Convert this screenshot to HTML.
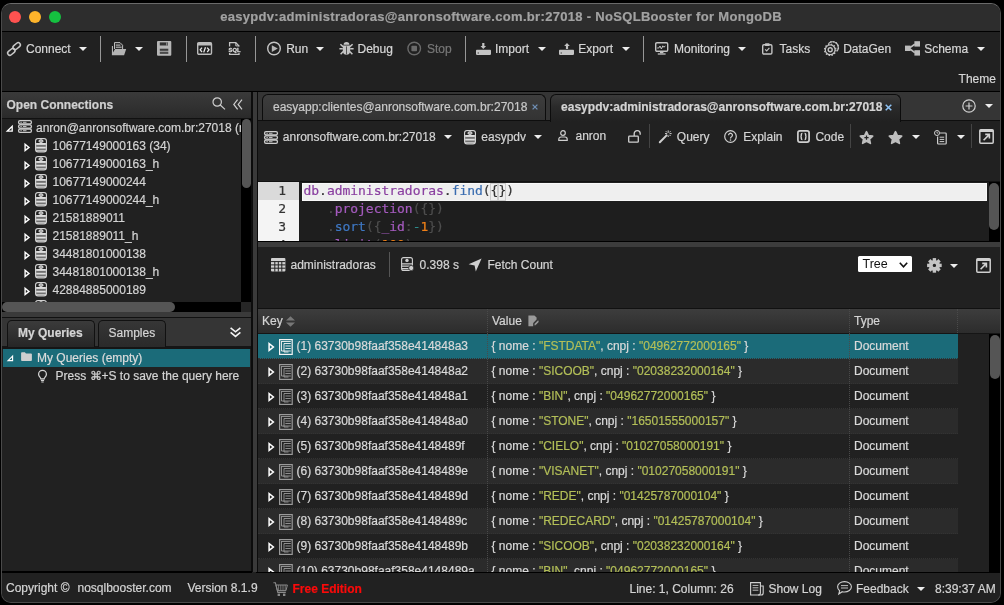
<!DOCTYPE html>
<html>
<head>
<meta charset="utf-8">
<title>NoSQLBooster for MongoDB</title>
<style>
html,body{margin:0;padding:0;background:#000;}
body{width:1004px;height:605px;overflow:hidden;position:relative;font-family:"Liberation Sans",sans-serif;font-size:12px;color:#d4d4d4;}
#win{position:absolute;left:1px;top:3px;width:1000px;height:600px;box-sizing:border-box;border:1px solid #4a4a4a;border-top-color:#6a6a6a;border-radius:10px;background:#212121;overflow:hidden;}
#in{position:absolute;left:-2px;top:-4px;width:1004px;height:605px;will-change:transform;}
.a{position:absolute;}
.t{position:absolute;white-space:nowrap;line-height:16px;height:16px;-webkit-text-stroke:0.2px currentColor;}
.b{font-weight:bold;}
svg{position:absolute;overflow:visible;}
.mono{position:absolute;white-space:pre;font-family:"DejaVu Sans Mono","Liberation Mono",monospace;font-size:13px;letter-spacing:-0.03px;line-height:18px;height:18px;-webkit-text-stroke:0.2px currentColor;}
.s{color:#b3bf58;}
.car{position:absolute;width:0;height:0;border-left:4.2px solid transparent;border-right:4.2px solid transparent;border-top:4.6px solid #ececec;margin-left:-0.2px;margin-top:-0.3px;}
.vs{position:absolute;width:1px;background:#979797;}
</style>
</head>
<body>
<div id="win"><div id="in">

<!-- TITLE BAR -->
<div class="a" id="titlebar" style="left:0;top:0;width:1004px;height:31px;background:#2d2d2d;"></div>
<div class="a" style="left:0;top:31px;width:1004px;height:1px;background:#000;"></div>
<div class="a" style="left:9px;top:11px;width:12px;height:12px;border-radius:50%;background:#fe5250;"></div>
<div class="a" style="left:29px;top:11px;width:12px;height:12px;border-radius:50%;background:#feb42b;"></div>
<div class="a" style="left:49px;top:11px;width:12px;height:12px;border-radius:50%;background:#15c040;"></div>
<div class="t b" id="title" style="left:0;width:1002px;text-align:center;top:9px;font-size:13px;letter-spacing:0.31px;color:#a2a2a2;">easypdv:administradoras@anronsoftware.com.br:27018 - NoSQLBooster for MongoDB</div>

<!-- MAIN TOOLBAR -->
<div class="a" id="toolbar" style="left:0;top:32px;width:1004px;height:59px;background:#212121;"></div>
<div class="a" style="left:0;top:91px;width:1004px;height:1px;background:#000;"></div>


<!-- toolbar items -->
<div id="tb" style="color:#d6d6d6;">
<!-- link icon -->
<svg style="left:5.9px;top:40.7px" width="16" height="16" viewBox="0 0 16 16" fill="none" stroke="#c8c8c8" stroke-width="1.5"><g transform="rotate(-40 8 8)"><rect x="0" y="6.3" width="8.2" height="4.4" rx="2.2"/><rect x="7.8" y="5.3" width="8.2" height="4.4" rx="2.2"/></g></svg>
<div class="t" style="left:26px;top:41px;">Connect</div>
<div class="car" style="left:79px;top:47px;"></div>
<div class="vs" style="left:100px;top:36px;height:26px;"></div>
<!-- open folder icon -->
<svg style="left:111px;top:41px" width="16" height="16" viewBox="0 0 16 16"><path d="M3.5 8V1.6h5.5l2.6 2.6V8" fill="#2c2c2c" stroke="#bebebe" stroke-width="1"/><path d="M4.8 4.1h4.6M4.8 6.2h5.8" stroke="#c8c8c8" stroke-width="1"/><path d="M0.9 5h1.1v6.4L4.1 7.9H15.2L13.1 14.3H0.9z" fill="#b4b4b4"/></svg>
<div class="car" style="left:135px;top:47px;"></div>
<!-- save icon -->
<svg style="left:157.3px;top:41.2px" width="15" height="15" viewBox="0 0 15 15"><rect x="0" y="0" width="14.3" height="14.7" rx="1" fill="#b6b6b6"/><rect x="2.8" y="1.4" width="8.2" height="3.1" fill="#333"/><rect x="9.4" y="1.4" width="0.9" height="3.1" fill="#b6b6b6"/><rect x="2.8" y="7.7" width="8.5" height="2.1" fill="#3c3c3c"/><rect x="2.8" y="10.7" width="8.5" height="2.2" fill="#4a4a4a"/></svg>
<div class="vs" style="left:186px;top:36px;height:26px;"></div>
<!-- code icon -->
<svg style="left:197px;top:42px" width="15" height="13" viewBox="0 0 15 13"><rect x="0.7" y="0.7" width="13.8" height="11.6" rx="1.2" fill="none" stroke="#bcbcbc" stroke-width="1.4"/><rect x="0.7" y="0.7" width="13.8" height="2.8" fill="#bcbcbc"/><path d="M5 5.6L3.2 7.8L5 10M10.2 5.6L12 7.8L10.2 10M8.5 5.2L6.7 10.4" fill="none" stroke="#e8e8e8" stroke-width="1.3"/></svg>
<!-- sql icon -->
<svg style="left:228px;top:42px" width="13" height="13" viewBox="0 0 13 13"><path d="M1.6 4.6V0.7h6.2l3.2 3.2v0.7M1.6 11v1.4h9.4V11" fill="none" stroke="#c4c4c4" stroke-width="1.3"/><path d="M7.8 0.7v3.2h3.2" fill="none" stroke="#c4c4c4" stroke-width="1"/><text x="0.6" y="10" font-family="Liberation Sans, sans-serif" font-size="5.8" font-weight="bold" fill="#d8d8d8" stroke="#d8d8d8" stroke-width="0.3">SQL</text></svg>
<div class="vs" style="left:255px;top:36px;height:26px;"></div>
<!-- run icon -->
<svg style="left:267px;top:41px" width="15" height="15" viewBox="0 0 15 15"><circle cx="7" cy="7.5" r="6.3" fill="none" stroke="#c4c4c4" stroke-width="1.4"/><path d="M4.8 4.3L10.8 7.5L4.8 10.9z" fill="#b4b4b4"/></svg>
<div class="t" style="left:286.2px;top:41px;">Run</div>
<div class="car" style="left:316px;top:47px;"></div>
<!-- bug icon -->
<svg style="left:338.5px;top:41px" width="15" height="15" viewBox="0 0 15 15"><path d="M4.6 3.8a2.9 2.8 0 0 1 5.8 0z" fill="#c4c4c4"/><path d="M3.8 4.6h7.4v5a3.7 4.200 0 0 1-7.4 0z" fill="#c4c4c4"/><path d="M3.8 7.8H0.4M11.200 7.8h3.4M4 5.6L1.4 3.200M11 5.6L13.6 3.200M4.200 10.4L1.6 13.200M10.8 10.4L13.4 13.200" stroke="#c4c4c4" stroke-width="1.5" fill="none"/><path d="M7.5 5.4v8" stroke="#444" stroke-width="0.9"/></svg>
<div class="t" style="left:357.5px;top:41px;">Debug</div>
<!-- stop icon -->
<svg style="left:407px;top:41px" width="15" height="15" viewBox="0 0 15 15"><circle cx="7.2" cy="7.5" r="6.3" fill="none" stroke="#6a6a6a" stroke-width="1.4"/><rect x="4.4" y="4.7" width="5.6" height="5.6" rx="0.8" fill="#6a6a6a"/></svg>
<div class="t" style="left:427px;top:41px;color:#777;">Stop</div>
<div class="vs" style="left:465px;top:36px;height:26px;"></div>
<!-- import icon -->
<svg style="left:476px;top:41px" width="16" height="15" viewBox="0 0 16 15"><rect x="0" y="8.7" width="15" height="5.2" rx="0.8" fill="#c4c4c4"/><rect x="1.6" y="11.4" width="1.4" height="1.2" fill="#555"/><path d="M6.2 2h2.2v3h1.7L7.3 8.1L4.5 5h1.7z" fill="#c4c4c4"/></svg>
<div class="t" style="left:495px;top:41px;">Import</div>
<div class="car" style="left:538px;top:47px;"></div>
<!-- export icon -->
<svg style="left:559px;top:41px" width="16" height="15" viewBox="0 0 16 15"><rect x="0" y="8.7" width="15" height="5.2" rx="0.8" fill="#c4c4c4"/><rect x="1.6" y="11.4" width="1.4" height="1.2" fill="#555"/><path d="M6.9 8h2.2V5h1.7L8 1.9L5.2 5h1.7z" fill="#c4c4c4"/></svg>
<div class="t" style="left:578.3px;top:41px;">Export</div>
<div class="car" style="left:622px;top:47px;"></div>
<div class="vs" style="left:643px;top:36px;height:26px;"></div>
<!-- monitor icon -->
<svg style="left:655px;top:42px" width="14" height="13" viewBox="0 0 14 13"><rect x="0.7" y="0.7" width="12" height="8.6" rx="1.2" fill="none" stroke="#c4c4c4" stroke-width="1.4"/><path d="M2.2 6h1.6l1.2-2l1.4 3l1.4-3.2l1 1.4l1.6-1.2" fill="none" stroke="#c4c4c4" stroke-width="1"/><path d="M5 9.6v1.6h3.4V9.6z" fill="#c4c4c4"/><path d="M2.8 12h7.8" stroke="#c4c4c4" stroke-width="1.3" fill="none"/></svg>
<div class="t" style="left:674px;top:41px;">Monitoring</div>
<div class="car" style="left:738px;top:47px;"></div>
<!-- tasks icon -->
<svg style="left:762px;top:42.5px" width="11" height="12" viewBox="0 0 11 12"><rect x="0.7" y="1.8" width="9.2" height="9.2" rx="1.2" fill="none" stroke="#c4c4c4" stroke-width="1.4"/><rect x="3" y="0.3" width="4.6" height="2.6" rx="0.6" fill="#c4c4c4"/><path d="M3.2 6.4l1.5 1.5l2.7-3" fill="none" stroke="#c4c4c4" stroke-width="1.2"/></svg>
<div class="t" style="left:779.6px;top:41px;">Tasks</div>
<!-- datagen icon -->
<svg style="left:824px;top:41px" width="15" height="15" viewBox="0 0 15 15" fill="none" stroke="#c4c4c4"><circle cx="6.2" cy="8.8" r="4.9" stroke-width="1.2"/><circle cx="6.2" cy="8.8" r="5.7" stroke-width="1.2" stroke-dasharray="1.5 1.480"/><circle cx="6.2" cy="8.8" r="2" stroke-width="1.4"/><path d="M4.4 2.6A5.6 5.6 0 0 1 12.8 10.4" stroke-width="1.2"/><path d="M6.2 0.9A6.2 6.2 0 0 1 14.2 8.6" stroke-width="1.3" stroke-dasharray="1.5 1.4"/></svg>
<div class="t" style="left:843.2px;top:41px;">DataGen</div>
<!-- schema icon -->
<svg style="left:905px;top:41px" width="15" height="15" viewBox="0 0 15 15"><rect x="0" y="4.6" width="5.6" height="5.4" fill="#bcbcbc"/><rect x="9.4" y="0.2" width="5.6" height="5.4" fill="#bcbcbc"/><rect x="9.4" y="9.2" width="5.6" height="5.4" fill="#bcbcbc"/><path d="M5 6.6L9.8 3.2M5 8L9.8 11.6" stroke="#bcbcbc" stroke-width="1.7"/></svg>
<div class="t" style="left:924.2px;top:41px;">Schema</div>
<div class="car" style="left:977px;top:47px;"></div>
<div class="t" style="left:958.6px;top:71px;">Theme</div>
</div>


<!-- LEFT PANEL -->
<div class="a" id="left" style="left:2px;top:92px;width:249px;height:479px;background:#212121;overflow:hidden;"></div>
<div class="a" style="left:2px;top:92px;width:249px;height:26px;background:linear-gradient(#3a3a3a,#2a2a2a);"></div>
<div class="a" style="left:2px;top:118px;width:249px;height:1px;background:#111;"></div>
<div class="t b" style="left:6.5px;top:97px;color:#d0d0d0;">Open Connections</div>
<svg style="left:212px;top:97px" width="14" height="13" viewBox="0 0 14 13" fill="none" stroke="#cfcfcf" stroke-width="1.2"><circle cx="5.2" cy="5" r="4.2"/><path d="M8.2 8L13 12.4"/></svg>
<svg style="left:233px;top:99px" width="10" height="11" viewBox="0 0 10 11" fill="none" stroke="#cfcfcf" stroke-width="1.2"><path d="M4.6 0.6L0.8 5.4L4.6 10.4M9 0.6L5.2 5.4L9 10.4"/></svg>
<!-- tree -->
<div class="a" id="tree" style="left:2px;top:119px;width:239px;height:183px;overflow:hidden;">
<div class="a" style="left:-2px;top:-119px;">
<svg style="left:6px;top:125px" width="7" height="7" viewBox="0 0 7 7"><path d="M6.2 1.2V6.2H1.2z" fill="none" stroke="#fff" stroke-width="1.3"/></svg>
<svg style="left:18px;top:119.8px" width="14" height="13" viewBox="0 0 14 13" fill="none" stroke="#cdcdcd" stroke-width="1.3"><rect x="0.6" y="0.6" width="12.8" height="3.4" rx="1.4"/><rect x="0.6" y="4.8" width="12.8" height="3.4" rx="1.4"/><rect x="0.6" y="9" width="12.8" height="3.4" rx="1.4"/><path d="M2.4 2.3h1.4M5 2.3h3.5M2.4 6.5h1.4M5 6.5h3.5M2.4 10.7h1.4M5 10.7h3.5" stroke-width="0.9"/></svg>
<div class="t" style="left:36px;top:120px;">anron@anronsoftware.com.br:27018 (mongodb 6.0.2)</div>
<svg style="left:24px;top:142.5px" width="7" height="9" viewBox="0 0 7 9"><path d="M1.1 1.3L5 4.4L1.1 7.5z" fill="none" stroke="#fff" stroke-width="1.4"/></svg><svg style="left:35px;top:138.2px" width="12" height="15" viewBox="0 0 12 15"><rect x="0.6" y="0.6" width="10.8" height="13.4" rx="2.4" fill="#707070" stroke="#d2d2d2" stroke-width="1.2"/><path d="M1.2 5V3a1.8 1.8 0 0 1 1.8-1.8h6a1.8 1.8 0 0 1 1.8 1.8V5z" fill="#222"/><ellipse cx="6" cy="3.1" rx="2.1" ry="1.3" fill="#9a9a9a" stroke="#e4e4e4" stroke-width="1"/><rect x="1.2" y="5" width="9.6" height="1.9" fill="#dedede"/><rect x="1.2" y="8.8" width="9.6" height="1.7" fill="#dedede"/><rect x="1.2" y="12.3" width="9.6" height="1" fill="#dedede"/></svg><div class="t" style="left:52.5px;top:138px;">10677149000163 (34)</div>
<svg style="left:24px;top:160.5px" width="7" height="9" viewBox="0 0 7 9"><path d="M1.1 1.3L5 4.4L1.1 7.5z" fill="none" stroke="#fff" stroke-width="1.4"/></svg><svg style="left:35px;top:156.2px" width="12" height="15" viewBox="0 0 12 15"><rect x="0.6" y="0.6" width="10.8" height="13.4" rx="2.4" fill="#707070" stroke="#d2d2d2" stroke-width="1.2"/><path d="M1.2 5V3a1.8 1.8 0 0 1 1.8-1.8h6a1.8 1.8 0 0 1 1.8 1.8V5z" fill="#222"/><ellipse cx="6" cy="3.1" rx="2.1" ry="1.3" fill="#9a9a9a" stroke="#e4e4e4" stroke-width="1"/><rect x="1.2" y="5" width="9.6" height="1.9" fill="#dedede"/><rect x="1.2" y="8.8" width="9.6" height="1.7" fill="#dedede"/><rect x="1.2" y="12.3" width="9.6" height="1" fill="#dedede"/></svg><div class="t" style="left:52.5px;top:156px;">10677149000163_h</div>
<svg style="left:24px;top:178.5px" width="7" height="9" viewBox="0 0 7 9"><path d="M1.1 1.3L5 4.4L1.1 7.5z" fill="none" stroke="#fff" stroke-width="1.4"/></svg><svg style="left:35px;top:174.2px" width="12" height="15" viewBox="0 0 12 15"><rect x="0.6" y="0.6" width="10.8" height="13.4" rx="2.4" fill="#707070" stroke="#d2d2d2" stroke-width="1.2"/><path d="M1.2 5V3a1.8 1.8 0 0 1 1.8-1.8h6a1.8 1.8 0 0 1 1.8 1.8V5z" fill="#222"/><ellipse cx="6" cy="3.1" rx="2.1" ry="1.3" fill="#9a9a9a" stroke="#e4e4e4" stroke-width="1"/><rect x="1.2" y="5" width="9.6" height="1.9" fill="#dedede"/><rect x="1.2" y="8.8" width="9.6" height="1.7" fill="#dedede"/><rect x="1.2" y="12.3" width="9.6" height="1" fill="#dedede"/></svg><div class="t" style="left:52.5px;top:174px;">10677149000244</div>
<svg style="left:24px;top:196.5px" width="7" height="9" viewBox="0 0 7 9"><path d="M1.1 1.3L5 4.4L1.1 7.5z" fill="none" stroke="#fff" stroke-width="1.4"/></svg><svg style="left:35px;top:192.2px" width="12" height="15" viewBox="0 0 12 15"><rect x="0.6" y="0.6" width="10.8" height="13.4" rx="2.4" fill="#707070" stroke="#d2d2d2" stroke-width="1.2"/><path d="M1.2 5V3a1.8 1.8 0 0 1 1.8-1.8h6a1.8 1.8 0 0 1 1.8 1.8V5z" fill="#222"/><ellipse cx="6" cy="3.1" rx="2.1" ry="1.3" fill="#9a9a9a" stroke="#e4e4e4" stroke-width="1"/><rect x="1.2" y="5" width="9.6" height="1.9" fill="#dedede"/><rect x="1.2" y="8.8" width="9.6" height="1.7" fill="#dedede"/><rect x="1.2" y="12.3" width="9.6" height="1" fill="#dedede"/></svg><div class="t" style="left:52.5px;top:192px;">10677149000244_h</div>
<svg style="left:24px;top:214.5px" width="7" height="9" viewBox="0 0 7 9"><path d="M1.1 1.3L5 4.4L1.1 7.5z" fill="none" stroke="#fff" stroke-width="1.4"/></svg><svg style="left:35px;top:210.2px" width="12" height="15" viewBox="0 0 12 15"><rect x="0.6" y="0.6" width="10.8" height="13.4" rx="2.4" fill="#707070" stroke="#d2d2d2" stroke-width="1.2"/><path d="M1.2 5V3a1.8 1.8 0 0 1 1.8-1.8h6a1.8 1.8 0 0 1 1.8 1.8V5z" fill="#222"/><ellipse cx="6" cy="3.1" rx="2.1" ry="1.3" fill="#9a9a9a" stroke="#e4e4e4" stroke-width="1"/><rect x="1.2" y="5" width="9.6" height="1.9" fill="#dedede"/><rect x="1.2" y="8.8" width="9.6" height="1.7" fill="#dedede"/><rect x="1.2" y="12.3" width="9.6" height="1" fill="#dedede"/></svg><div class="t" style="left:52.5px;top:210px;">21581889011</div>
<svg style="left:24px;top:232.5px" width="7" height="9" viewBox="0 0 7 9"><path d="M1.1 1.3L5 4.4L1.1 7.5z" fill="none" stroke="#fff" stroke-width="1.4"/></svg><svg style="left:35px;top:228.2px" width="12" height="15" viewBox="0 0 12 15"><rect x="0.6" y="0.6" width="10.8" height="13.4" rx="2.4" fill="#707070" stroke="#d2d2d2" stroke-width="1.2"/><path d="M1.2 5V3a1.8 1.8 0 0 1 1.8-1.8h6a1.8 1.8 0 0 1 1.8 1.8V5z" fill="#222"/><ellipse cx="6" cy="3.1" rx="2.1" ry="1.3" fill="#9a9a9a" stroke="#e4e4e4" stroke-width="1"/><rect x="1.2" y="5" width="9.6" height="1.9" fill="#dedede"/><rect x="1.2" y="8.8" width="9.6" height="1.7" fill="#dedede"/><rect x="1.2" y="12.3" width="9.6" height="1" fill="#dedede"/></svg><div class="t" style="left:52.5px;top:228px;">21581889011_h</div>
<svg style="left:24px;top:250.5px" width="7" height="9" viewBox="0 0 7 9"><path d="M1.1 1.3L5 4.4L1.1 7.5z" fill="none" stroke="#fff" stroke-width="1.4"/></svg><svg style="left:35px;top:246.2px" width="12" height="15" viewBox="0 0 12 15"><rect x="0.6" y="0.6" width="10.8" height="13.4" rx="2.4" fill="#707070" stroke="#d2d2d2" stroke-width="1.2"/><path d="M1.2 5V3a1.8 1.8 0 0 1 1.8-1.8h6a1.8 1.8 0 0 1 1.8 1.8V5z" fill="#222"/><ellipse cx="6" cy="3.1" rx="2.1" ry="1.3" fill="#9a9a9a" stroke="#e4e4e4" stroke-width="1"/><rect x="1.2" y="5" width="9.6" height="1.9" fill="#dedede"/><rect x="1.2" y="8.8" width="9.6" height="1.7" fill="#dedede"/><rect x="1.2" y="12.3" width="9.6" height="1" fill="#dedede"/></svg><div class="t" style="left:52.5px;top:246px;">34481801000138</div>
<svg style="left:24px;top:268.5px" width="7" height="9" viewBox="0 0 7 9"><path d="M1.1 1.3L5 4.4L1.1 7.5z" fill="none" stroke="#fff" stroke-width="1.4"/></svg><svg style="left:35px;top:264.2px" width="12" height="15" viewBox="0 0 12 15"><rect x="0.6" y="0.6" width="10.8" height="13.4" rx="2.4" fill="#707070" stroke="#d2d2d2" stroke-width="1.2"/><path d="M1.2 5V3a1.8 1.8 0 0 1 1.8-1.8h6a1.8 1.8 0 0 1 1.8 1.8V5z" fill="#222"/><ellipse cx="6" cy="3.1" rx="2.1" ry="1.3" fill="#9a9a9a" stroke="#e4e4e4" stroke-width="1"/><rect x="1.2" y="5" width="9.6" height="1.9" fill="#dedede"/><rect x="1.2" y="8.8" width="9.6" height="1.7" fill="#dedede"/><rect x="1.2" y="12.3" width="9.6" height="1" fill="#dedede"/></svg><div class="t" style="left:52.5px;top:264px;">34481801000138_h</div>
<svg style="left:24px;top:286.5px" width="7" height="9" viewBox="0 0 7 9"><path d="M1.1 1.3L5 4.4L1.1 7.5z" fill="none" stroke="#fff" stroke-width="1.4"/></svg><svg style="left:35px;top:282.2px" width="12" height="15" viewBox="0 0 12 15"><rect x="0.6" y="0.6" width="10.8" height="13.4" rx="2.4" fill="#707070" stroke="#d2d2d2" stroke-width="1.2"/><path d="M1.2 5V3a1.8 1.8 0 0 1 1.8-1.8h6a1.8 1.8 0 0 1 1.8 1.8V5z" fill="#222"/><ellipse cx="6" cy="3.1" rx="2.1" ry="1.3" fill="#9a9a9a" stroke="#e4e4e4" stroke-width="1"/><rect x="1.2" y="5" width="9.6" height="1.9" fill="#dedede"/><rect x="1.2" y="8.8" width="9.6" height="1.7" fill="#dedede"/><rect x="1.2" y="12.3" width="9.6" height="1" fill="#dedede"/></svg><div class="t" style="left:52.5px;top:282px;">42884885000189</div>
<svg style="left:24px;top:304.5px" width="7" height="9" viewBox="0 0 7 9"><path d="M1.1 1.3L5 4.4L1.1 7.5z" fill="none" stroke="#fff" stroke-width="1.4"/></svg><svg style="left:35px;top:300.2px" width="12" height="15" viewBox="0 0 12 15"><rect x="0.6" y="0.6" width="10.8" height="13.4" rx="2.4" fill="#707070" stroke="#d2d2d2" stroke-width="1.2"/><path d="M1.2 5V3a1.8 1.8 0 0 1 1.8-1.8h6a1.8 1.8 0 0 1 1.8 1.8V5z" fill="#222"/><ellipse cx="6" cy="3.1" rx="2.1" ry="1.3" fill="#9a9a9a" stroke="#e4e4e4" stroke-width="1"/><rect x="1.2" y="5" width="9.6" height="1.9" fill="#dedede"/><rect x="1.2" y="8.8" width="9.6" height="1.7" fill="#dedede"/><rect x="1.2" y="12.3" width="9.6" height="1" fill="#dedede"/></svg><div class="t" style="left:52.5px;top:300px;">42884885000189_h</div>
</div></div>
<!-- scrollbars -->
<div class="a" style="left:241px;top:119px;width:10px;height:183px;background:#000;"></div>
<div class="a" style="left:241.5px;top:119px;width:9.5px;height:69px;border-radius:5px;background:#555;"></div>
<div class="a" style="left:2px;top:302px;width:239px;height:10px;background:#000;"></div>
<div class="a" style="left:2px;top:302.3px;width:173px;height:9.4px;border-radius:5px;background:#555;"></div>
<div class="a" style="left:241px;top:302px;width:10px;height:10px;background:#262626;"></div>
<!-- h splitter -->
<div class="a" style="left:2px;top:312px;width:249px;height:5px;background:#3a3a3a;"></div>
<div class="a" style="left:2px;top:317px;width:249px;height:1px;background:#111;"></div>
<!-- bottom-left tabs -->
<div class="a" style="left:2px;top:318px;width:249px;height:29px;background:#353535;"></div>
<div class="a" style="left:2px;top:346px;width:249px;height:2.5px;background:#151515;"></div>
<div class="a" style="left:6.5px;top:320px;width:88px;height:27px;box-sizing:border-box;border:1px solid #111;border-bottom:none;border-radius:5px 5px 0 0;background:linear-gradient(#3b3b3b,#262626);"></div>
<div class="a" style="left:98px;top:320px;width:68px;height:27px;box-sizing:border-box;border:1px solid #111;border-bottom:none;border-radius:5px 5px 0 0;background:linear-gradient(#363636,#2a2a2a);"></div>
<div class="t b" style="left:18px;top:325px;color:#d4d4d4;">My Queries</div>
<div class="t" style="left:108.5px;top:325px;color:#d4d4d4;">Samples</div>
<svg style="left:230px;top:327px" width="11" height="11" viewBox="0 0 11 11" fill="none" stroke="#f4f4f4" stroke-width="1.6"><path d="M0.6 0.8L5.5 4.8L10.4 0.8M0.6 5.4L5.5 9.4L10.4 5.4"/></svg>
<div class="a" style="left:3px;top:349px;width:247px;height:18px;background:#1b6b79;"></div>
<svg style="left:7px;top:354.8px" width="6.3" height="6.3" viewBox="0 0 7 7"><path d="M6.2 1.2V6.2H1.2z" fill="none" stroke="#fff" stroke-width="1.3"/></svg>
<svg style="left:20.5px;top:352px" width="11" height="9" viewBox="0 0 12 10"><path d="M0 1.2a1 1 0 0 1 1-1h3.2l1.2 1.4H11a1 1 0 0 1 1 1V9a1 1 0 0 1-1 1H1a1 1 0 0 1-1-1z" fill="#d0d0d0"/></svg>
<div class="t" style="left:37px;top:349.5px;color:#dcdcdc;">My Queries (empty)</div>
<svg style="left:37.5px;top:369.5px" width="9" height="13" viewBox="0 0 9 13" fill="none" stroke="#d4d4d4" stroke-width="1.25"><path d="M2.8 8.8C2.8 7.4 0.6 6.6 0.6 4.2A3.9 3.8 0 0 1 8.4 4.2C8.4 6.6 6.2 7.4 6.2 8.8z"/><path d="M2.9 10.4h3.2M3.3 12h2.4" stroke-width="1.1"/></svg>
<div class="t" style="left:55.5px;top:367.5px;">Press ⌘+S to save the query here</div>
<!-- v splitter -->
<div class="a" style="left:251px;top:92px;width:1.5px;height:480px;background:#0c0c0c;"></div>
<div class="a" style="left:252.5px;top:92px;width:4.3px;height:480px;background:#3a3a3a;"></div>
<div class="a" style="left:256.8px;top:92px;width:1.2px;height:480px;background:#0c0c0c;"></div>
<div class="a" style="left:0px;top:571px;width:252px;height:2px;background:#000;"></div>
<div class="a" style="left:256px;top:572px;width:748px;height:1px;background:#000;"></div>


<!-- RIGHT PANEL -->
<div class="a" id="right" style="left:258px;top:92px;width:742px;height:480px;background:#212121;"></div>
<!-- tab strip -->
<div class="a" style="left:258px;top:92px;width:742px;height:28px;background:#353535;"></div>
<div class="a" style="left:258px;top:119.5px;width:742px;height:1.5px;background:#0e0e0e;"></div>
<div class="a" style="left:262px;top:94px;width:284px;height:26px;box-sizing:border-box;border:1px solid #0c0c0c;border-bottom:none;border-radius:6px 6px 0 0;background:linear-gradient(#3d3d3d,#333);"></div>
<div class="t" style="left:273px;top:98.5px;color:#cacaca;">easyapp:clientes@anronsoftware.com.br:27018</div>
<svg style="left:532px;top:104px" width="6" height="6" viewBox="0 0 6 6"><path d="M0.6 0.6L5.4 5.4M5.4 0.6L0.6 5.4" stroke="#6f8fb5" stroke-width="1.3"/></svg>
<div class="a" style="left:550px;top:94px;width:351px;height:27.5px;box-sizing:border-box;border:1px solid #0c0c0c;border-bottom:none;border-radius:6px 6px 0 0;background:linear-gradient(#3a3a3a,#2a2a2a 45%,#212121);"></div>
<div class="t b" style="left:561px;top:98.5px;color:#d4d4d4;letter-spacing:0.02px;">easypdv:administradoras@anronsoftware.com.br:27018</div>
<svg style="left:885px;top:103.5px" width="7" height="7" viewBox="0 0 7 7"><path d="M0.7 0.7L6.3 6.3M6.3 0.7L0.7 6.3" stroke="#8ec2f4" stroke-width="1.5"/></svg>
<svg style="left:962px;top:99px" width="14" height="14" viewBox="0 0 14 14" fill="none" stroke="#d0d0d0" stroke-width="1.2"><circle cx="7" cy="7" r="6.2"/><path d="M7 3.6v6.8M3.6 7h6.8"/></svg>
<div class="car" style="left:985px;top:104.5px;"></div>

<!-- query toolbar -->
<svg style="left:264px;top:130.5px" width="14" height="13" viewBox="0 0 14 13" fill="none" stroke="#cdcdcd" stroke-width="1.3"><rect x="0.6" y="0.6" width="12.8" height="3.4" rx="1.4"/><rect x="0.6" y="4.8" width="12.8" height="3.4" rx="1.4"/><rect x="0.6" y="9" width="12.8" height="3.4" rx="1.4"/><path d="M2.4 2.3h1.4M5 2.3h3.5M2.4 6.5h1.4M5 6.5h3.5M2.4 10.7h1.4M5 10.7h3.5" stroke-width="0.9"/></svg>
<div class="t" style="left:282.8px;top:128.5px;">anronsoftware.com.br:27018</div>
<div class="car" style="left:444px;top:135px;"></div>
<svg style="left:464px;top:130px" width="12" height="15" viewBox="0 0 12 15"><rect x="0.6" y="0.6" width="10.8" height="13.4" rx="2.4" fill="#707070" stroke="#d2d2d2" stroke-width="1.2"/><path d="M1.2 5V3a1.8 1.8 0 0 1 1.8-1.8h6a1.8 1.8 0 0 1 1.8 1.8V5z" fill="#222"/><ellipse cx="6" cy="3.1" rx="2.1" ry="1.3" fill="#9a9a9a" stroke="#e4e4e4" stroke-width="1"/><rect x="1.2" y="5" width="9.6" height="1.9" fill="#dedede"/><rect x="1.2" y="8.8" width="9.6" height="1.7" fill="#dedede"/><rect x="1.2" y="12.3" width="9.6" height="1" fill="#dedede"/></svg>
<div class="t" style="left:481.3px;top:128.5px;">easypdv</div>
<div class="car" style="left:534px;top:135px;"></div>
<svg style="left:558px;top:130px" width="10" height="11" viewBox="0 0 10 11" fill="none" stroke="#d0d0d0" stroke-width="1.2"><circle cx="5" cy="3" r="2.3"/><path d="M0.8 10.4v-1.2a2.2 2.2 0 0 1 2.2-2.2h4a2.2 2.2 0 0 1 2.2 2.2v1.2z"/></svg>
<div class="t" style="left:575.5px;top:128px;">anron</div>
<svg style="left:628px;top:130px" width="13" height="13" viewBox="0 0 13 13" fill="none" stroke="#d0d0d0" stroke-width="1.3"><rect x="0.7" y="6.2" width="9.6" height="6" rx="0.8"/><path d="M6.2 6V3.6a3 3 0 0 1 6 0v1.2"/></svg>
<div class="vs" style="left:649px;top:124px;height:24px;background:#444;"></div>
<svg style="left:658.5px;top:129.8px" width="13" height="13" viewBox="0 0 13 13"><path d="M0.8 12.2L7.6 5.4" stroke="#d0d0d0" stroke-width="2" stroke-linecap="round"/><path d="M9.2 0.4v2.4M9.2 5.4v1.6M6 3.6h2.2M10.6 3.6h2M6.8 1.2l1.2 1.2M11.6 1.2l-1.2 1.2M11.6 6l-1.2-1.2" stroke="#d0d0d0" stroke-width="1"/></svg>
<div class="t" style="left:676.8px;top:128.5px;">Query</div>
<svg style="left:723.8px;top:129.7px" width="13" height="13" viewBox="0 0 13 13" fill="none" stroke="#d0d0d0" stroke-width="1.2"><circle cx="6.5" cy="6.5" r="5.8"/><path d="M4.6 5.2a1.9 1.9 0 1 1 2.9 1.6c-0.7 0.4-1 0.8-1 1.6" stroke-width="1.3"/><path d="M6.5 9.4v1.3" stroke-width="1.3"/></svg>
<div class="t" style="left:743.2px;top:128.5px;">Explain</div>
<svg style="left:797px;top:129.7px" width="13" height="13" viewBox="0 0 13 13" fill="none" stroke="#d0d0d0"><rect x="0.9" y="0.9" width="11.2" height="11.2" rx="2" stroke-width="1.7"/><path d="M5.4 3.5c-1.3 0-1.1 1.3-1.1 2c0 0.6-0.5 1-0.9 1c0.4 0 0.9 0.4 0.9 1c0 0.700-0.2 2 1.1 2M7.6 3.5c1.3 0 1.1 1.3 1.1 2c0 0.6 0.5 1 0.9 1c-0.4 0-0.9 0.4-0.9 1c0 0.700 0.2 2-1.1 2" stroke-width="1.4"/></svg>
<div class="t" style="left:815.4px;top:128.5px;">Code</div>
<div class="vs" style="left:850px;top:124px;height:24px;background:#444;"></div>
<svg style="left:859px;top:129.5px" width="15" height="15" viewBox="0 0 15 15"><path d="M7.5 1.6l1.9 4l4.3 0.5l-3.2 3l0.9 4.3L7.5 11.2l-3.9 2.2l0.9-4.3l-3.2-3l4.3-0.5z" fill="#bebebe" stroke="#bebebe" stroke-width="1.6" stroke-linejoin="round"/><path d="M7.5 5.6v4.2M5.4 7.7h4.2" stroke="#212121" stroke-width="1.2"/></svg>
<svg style="left:888px;top:129.5px" width="15" height="15" viewBox="0 0 15 15"><path d="M7.5 1.6l1.9 4l4.3 0.5l-3.2 3l0.9 4.3L7.5 11.2l-3.9 2.2l0.9-4.3l-3.2-3l4.3-0.5z" fill="#bebebe" stroke="#bebebe" stroke-width="1.6" stroke-linejoin="round"/></svg>
<div class="car" style="left:912px;top:135px;"></div>
<svg style="left:934px;top:129.5px" width="13" height="15" viewBox="0 0 13 15" fill="none" stroke="#d0d0d0"><path d="M6 3h5.4a0.8 0.8 0 0 1 0.8 0.8v9.4a0.8 0.8 0 0 1-0.8 0.8H4.4a0.8 0.8 0 0 1-0.8-0.8V6.4" stroke-width="1.2"/><circle cx="3" cy="3" r="2.5" stroke-width="1"/><path d="M3 1.6v1.5h1.2" stroke-width="0.8"/><path d="M5.6 7.2h4.6M5.6 9.4h4.6M5.6 11.6h4.6" stroke-width="1"/></svg>
<div class="car" style="left:957px;top:135px;"></div>
<div class="vs" style="left:971px;top:124px;height:24px;background:#444;"></div>
<svg style="left:979px;top:129px" width="15" height="15" viewBox="0 0 15 15"><rect x="0.8" y="0.8" width="13.4" height="13.4" rx="1" fill="none" stroke="#d0d0d0" stroke-width="1.5"/><rect x="0.8" y="0.8" width="13.4" height="2.2" fill="#d0d0d0"/><path d="M4.6 11.2L10.2 5.6M6.2 5.4h4.2v4.2" fill="none" stroke="#d0d0d0" stroke-width="1.6"/></svg>

<!-- editor -->
<div class="a" style="left:258px;top:181px;width:742px;height:1px;background:#111;"></div>
<div class="a" id="editor" style="left:258px;top:182px;width:742px;height:59px;overflow:hidden;background:#1e1e1e;">
  <div class="a" style="left:0;top:0;width:41px;height:59px;background:#f4f4f4;"></div>
  <div class="a" style="left:0;top:0;width:41px;height:18px;background:#dadada;"></div>
  <div class="a" style="left:43.5px;top:1px;width:685px;height:18px;background:#efefef;box-sizing:border-box;border:1px solid #f8f8f8;"></div>
  <div class="a" style="left:731px;top:0;width:11px;height:59px;background:#000;"></div>
  <div class="a" style="left:731px;top:0.5px;width:10px;height:47.5px;border-radius:5px;background:#555;"></div>
  <div class="mono" style="left:0;top:0;width:28px;text-align:right;color:#333;">1</div>
  <div class="mono" style="left:0;top:18px;width:28px;text-align:right;color:#333;">2</div>
  <div class="mono" style="left:0;top:36px;width:28px;text-align:right;color:#333;">3</div>
  <div class="mono" style="left:0;top:54px;width:28px;text-align:right;color:#333;">4</div>
  <div class="a" style="left:232.2px;top:0.5px;width:8.3px;height:18px;box-sizing:border-box;border:1px solid #cdcdcd;"></div><div class="a" style="left:239.8px;top:0.5px;width:8.3px;height:18px;box-sizing:border-box;border:1px solid #cdcdcd;"></div>
  <div class="mono" style="left:45.5px;top:0;"><span style="color:#8a3fa0">db</span><span style="color:#333">.</span><span style="color:#8a3fa0">administradoras</span><span style="color:#333">.</span><span style="color:#3a6db0">find</span><span style="color:#333">({})</span></div>
  <div class="mono" style="left:45.5px;top:18px;"><span style="color:#4e4e4e">   .</span><span style="color:#a55bbf">projection</span><span style="color:#4e4e4e">({})</span></div>
  <div class="mono" style="left:45.5px;top:36px;"><span style="color:#4e4e4e">   .</span><span style="color:#3f78c4">sort</span><span style="color:#4e4e4e">({</span><span style="color:#a55bbf">_id</span><span style="color:#4e4e4e">:</span><span style="color:#2d8a8a">-</span><span style="color:#f08018">1</span><span style="color:#4e4e4e">})</span></div>
  <div class="mono" style="left:45.5px;top:54px;"><span style="color:#4e4e4e">   .</span><span style="color:#a55bbf">limit</span><span style="color:#4e4e4e">(</span><span style="color:#f08018">100</span><span style="color:#4e4e4e">)</span></div>
</div>
<!-- splitter -->
<div class="a" style="left:258px;top:241px;width:742px;height:6.2px;background:#3c3c3c;border-top:1px solid #000;box-sizing:border-box;"></div>

<!-- result toolbar -->
<svg style="left:271px;top:257.5px" width="15" height="14" viewBox="0 0 15 14"><rect x="0" y="0" width="14.4" height="13.6" rx="1" fill="#d0d0d0"/><path d="M0 3.6h14.4M0 6.9h14.4M0 10.2h14.4M3.8 3.6v10M7.3 3.6v10M10.8 3.6v10" stroke="#212121" stroke-width="1"/></svg>
<div class="t" style="left:290.5px;top:256.5px;">administradoras</div>
<div class="vs" style="left:389px;top:252px;height:25px;background:#555;"></div>
<svg style="left:401px;top:257px" width="13" height="14" viewBox="0 0 13 14"><rect x="0.6" y="0.6" width="10.8" height="12.8" rx="2" fill="none" stroke="#d0d0d0" stroke-width="1.1"/><path d="M1 6.2h10v1.2H1zM1 8.6h10v1.2H1zM1 11h10v1.2H1z" fill="#d0d0d0"/><circle cx="6" cy="3.4" r="1.7" fill="#d0d0d0"/><circle cx="10.2" cy="11" r="2.6" fill="#d0d0d0" stroke="#212121" stroke-width="0.8"/></svg>
<div class="t" style="left:419.6px;top:256.5px;">0.398 s</div>
<svg style="left:468px;top:257.5px" width="14" height="14" viewBox="0 0 14 14"><path d="M13.6 0.4L0.6 6.2L6.6 7.4L7.8 13.4z" fill="#d0d0d0"/></svg>
<div class="t" style="left:487.5px;top:256.5px;">Fetch Count</div>
<div class="a" style="left:858.2px;top:255.7px;width:54px;height:16.6px;background:#fff;border-radius:1.5px;"></div>
<div class="t" style="left:862.5px;top:256px;font-size:12.5px;color:#111;-webkit-text-stroke:0;">Tree</div>
<svg style="left:899px;top:261.5px" width="9" height="6" viewBox="0 0 9 6" fill="none" stroke="#111" stroke-width="1.6"><path d="M0.8 0.8L4.5 4.8L8.2 0.8"/></svg>
<svg style="left:926.5px;top:258px" width="15" height="15" viewBox="0 0 15 15"><g transform="translate(7.4 7.4)"><circle r="3.6" fill="none" stroke="#c4c4c4" stroke-width="3.8"/><rect x="-1.7" y="-7.3" width="3.4" height="3" fill="#c4c4c4" transform="rotate(0)"/><rect x="-1.7" y="-7.3" width="3.4" height="3" fill="#c4c4c4" transform="rotate(45)"/><rect x="-1.7" y="-7.3" width="3.4" height="3" fill="#c4c4c4" transform="rotate(90)"/><rect x="-1.7" y="-7.3" width="3.4" height="3" fill="#c4c4c4" transform="rotate(135)"/><rect x="-1.7" y="-7.3" width="3.4" height="3" fill="#c4c4c4" transform="rotate(180)"/><rect x="-1.7" y="-7.3" width="3.4" height="3" fill="#c4c4c4" transform="rotate(225)"/><rect x="-1.7" y="-7.3" width="3.4" height="3" fill="#c4c4c4" transform="rotate(270)"/><rect x="-1.7" y="-7.3" width="3.4" height="3" fill="#c4c4c4" transform="rotate(315)"/></g></svg>
<div class="car" style="left:950px;top:264px;"></div>
<svg style="left:976px;top:258px" width="15" height="15" viewBox="0 0 15 15"><rect x="0.8" y="0.8" width="13.4" height="13.4" rx="1" fill="none" stroke="#d0d0d0" stroke-width="1.5"/><rect x="0.8" y="0.8" width="13.4" height="2.2" fill="#d0d0d0"/><path d="M4.6 11.2L10.2 5.6M6.2 5.4h4.2v4.2" fill="none" stroke="#d0d0d0" stroke-width="1.6"/></svg>

<!-- table header -->
<div class="a" style="left:258px;top:308px;width:742px;height:1px;background:#111;"></div>
<div class="a" style="left:258px;top:309px;width:742px;height:24px;background:linear-gradient(#3d3d3d,#2c2c2c);"></div>
<div class="a" style="left:258px;top:333px;width:742px;height:1px;background:#151515;"></div>
<div class="t" style="left:262px;top:312.5px;">Key</div>
<svg style="left:285px;top:315.5px" width="11" height="11" viewBox="0 0 11 11"><path d="M5.5 0.2L10 4.6H1zM5.5 10.8L10 6.4H1z" fill="#777"/></svg>
<div class="t" style="left:492px;top:312.5px;">Value</div>
<svg style="left:528px;top:314.5px" width="11" height="12" viewBox="0 0 11 12"><path d="M0.4 0.4h6l2.2 2.2v2L5.2 8v3.2H0.4z" fill="#9a9a9a"/><path d="M10.4 4.8L6.4 8.8L6 10.6L7.8 10.2L11 7z" fill="#9a9a9a" stroke="#2c2c2c" stroke-width="0.5"/></svg>
<div class="t" style="left:854px;top:312.5px;">Type</div>
<div class="a" style="left:487px;top:309px;width:0;height:265px;border-left:1px dotted #4a4a4a;"></div>
<div class="a" style="left:849px;top:309px;width:0;height:265px;border-left:1px dotted #4a4a4a;"></div>
<div class="a" style="left:957px;top:309px;width:0;height:24px;border-left:1px dotted #4a4a4a;"></div>
<!-- table body -->
<div class="a" id="tbody" style="left:258px;top:334px;width:731px;height:238px;overflow:hidden;">
<div class="a" style="left:-258px;top:-334px;">
<div class="a" style="left:258px;top:334px;width:699.5px;height:25px;background:#1b6b79;box-sizing:border-box;border-bottom:1px dotted #333;"></div><svg style="left:268px;top:342px" width="7" height="10" viewBox="0 0 7 10"><path d="M1.1 1.6L5.4 5L1.1 8.4z" fill="none" stroke="#fff" stroke-width="1.5"/></svg><svg style="left:279px;top:339px" width="14" height="16" viewBox="0 0 14 16" fill="none" stroke="#f4f4f4"><rect x="0.6" y="0.6" width="12.6" height="14.8" stroke-width="1.2"/><path d="M2 2.5h9.8M2.5 2.5v9.5h2.5M5 4.5v8.5h4.5M5 4.5h6.8M6.4 7h5.4M6.4 9.5h5.4M5 12h6.8" stroke-width="0.9"/></svg><div class="t" style="left:296.5px;top:338px;color:#dadada;">(1) 63730b98faaf358e414848a3</div><div class="t" style="left:491.5px;top:338px;color:#dadada;">{ nome : <span class="s">"FSTDATA"</span>, cnpj : <span class="s">"04962772000165"</span> }</div><div class="t" style="left:854px;top:338px;color:#dadada;">Document</div>
<div class="a" style="left:258px;top:359px;width:699.5px;height:25px;background:#2b2b2b;box-sizing:border-box;border-bottom:1px dotted #333;"></div><svg style="left:268px;top:367px" width="7" height="10" viewBox="0 0 7 10"><path d="M1.1 1.6L5.4 5L1.1 8.4z" fill="none" stroke="#fff" stroke-width="1.5"/></svg><svg style="left:279px;top:364px" width="14" height="16" viewBox="0 0 14 16" fill="none" stroke="#9a9a9a"><rect x="0.6" y="0.6" width="12.6" height="14.8" stroke-width="1.2"/><path d="M2 2.5h9.8M2.5 2.5v9.5h2.5M5 4.5v8.5h4.5M5 4.5h6.8M6.4 7h5.4M6.4 9.5h5.4M5 12h6.8" stroke-width="0.9"/></svg><div class="t" style="left:296.5px;top:363px;color:#dadada;">(2) 63730b98faaf358e414848a2</div><div class="t" style="left:491.5px;top:363px;color:#dadada;">{ nome : <span class="s">"SICOOB"</span>, cnpj : <span class="s">"02038232000164"</span> }</div><div class="t" style="left:854px;top:363px;color:#dadada;">Document</div>
<div class="a" style="left:258px;top:384px;width:699.5px;height:25px;background:#212121;box-sizing:border-box;border-bottom:1px dotted #333;"></div><svg style="left:268px;top:392px" width="7" height="10" viewBox="0 0 7 10"><path d="M1.1 1.6L5.4 5L1.1 8.4z" fill="none" stroke="#fff" stroke-width="1.5"/></svg><svg style="left:279px;top:389px" width="14" height="16" viewBox="0 0 14 16" fill="none" stroke="#9a9a9a"><rect x="0.6" y="0.6" width="12.6" height="14.8" stroke-width="1.2"/><path d="M2 2.5h9.8M2.5 2.5v9.5h2.5M5 4.5v8.5h4.5M5 4.5h6.8M6.4 7h5.4M6.4 9.5h5.4M5 12h6.8" stroke-width="0.9"/></svg><div class="t" style="left:296.5px;top:388px;color:#dadada;">(3) 63730b98faaf358e414848a1</div><div class="t" style="left:491.5px;top:388px;color:#dadada;">{ nome : <span class="s">"BIN"</span>, cnpj : <span class="s">"04962772000165"</span> }</div><div class="t" style="left:854px;top:388px;color:#dadada;">Document</div>
<div class="a" style="left:258px;top:409px;width:699.5px;height:25px;background:#2b2b2b;box-sizing:border-box;border-bottom:1px dotted #333;"></div><svg style="left:268px;top:417px" width="7" height="10" viewBox="0 0 7 10"><path d="M1.1 1.6L5.4 5L1.1 8.4z" fill="none" stroke="#fff" stroke-width="1.5"/></svg><svg style="left:279px;top:414px" width="14" height="16" viewBox="0 0 14 16" fill="none" stroke="#9a9a9a"><rect x="0.6" y="0.6" width="12.6" height="14.8" stroke-width="1.2"/><path d="M2 2.5h9.8M2.5 2.5v9.5h2.5M5 4.5v8.5h4.5M5 4.5h6.8M6.4 7h5.4M6.4 9.5h5.4M5 12h6.8" stroke-width="0.9"/></svg><div class="t" style="left:296.5px;top:413px;color:#dadada;">(4) 63730b98faaf358e414848a0</div><div class="t" style="left:491.5px;top:413px;color:#dadada;">{ nome : <span class="s">"STONE"</span>, cnpj : <span class="s">"16501555000157"</span> }</div><div class="t" style="left:854px;top:413px;color:#dadada;">Document</div>
<div class="a" style="left:258px;top:434px;width:699.5px;height:25px;background:#212121;box-sizing:border-box;border-bottom:1px dotted #333;"></div><svg style="left:268px;top:442px" width="7" height="10" viewBox="0 0 7 10"><path d="M1.1 1.6L5.4 5L1.1 8.4z" fill="none" stroke="#fff" stroke-width="1.5"/></svg><svg style="left:279px;top:439px" width="14" height="16" viewBox="0 0 14 16" fill="none" stroke="#9a9a9a"><rect x="0.6" y="0.6" width="12.6" height="14.8" stroke-width="1.2"/><path d="M2 2.5h9.8M2.5 2.5v9.5h2.5M5 4.5v8.5h4.5M5 4.5h6.8M6.4 7h5.4M6.4 9.5h5.4M5 12h6.8" stroke-width="0.9"/></svg><div class="t" style="left:296.5px;top:438px;color:#dadada;">(5) 63730b98faaf358e4148489f</div><div class="t" style="left:491.5px;top:438px;color:#dadada;">{ nome : <span class="s">"CIELO"</span>, cnpj : <span class="s">"01027058000191"</span> }</div><div class="t" style="left:854px;top:438px;color:#dadada;">Document</div>
<div class="a" style="left:258px;top:459px;width:699.5px;height:25px;background:#2b2b2b;box-sizing:border-box;border-bottom:1px dotted #333;"></div><svg style="left:268px;top:467px" width="7" height="10" viewBox="0 0 7 10"><path d="M1.1 1.6L5.4 5L1.1 8.4z" fill="none" stroke="#fff" stroke-width="1.5"/></svg><svg style="left:279px;top:464px" width="14" height="16" viewBox="0 0 14 16" fill="none" stroke="#9a9a9a"><rect x="0.6" y="0.6" width="12.6" height="14.8" stroke-width="1.2"/><path d="M2 2.5h9.8M2.5 2.5v9.5h2.5M5 4.5v8.5h4.5M5 4.5h6.8M6.4 7h5.4M6.4 9.5h5.4M5 12h6.8" stroke-width="0.9"/></svg><div class="t" style="left:296.5px;top:463px;color:#dadada;">(6) 63730b98faaf358e4148489e</div><div class="t" style="left:491.5px;top:463px;color:#dadada;">{ nome : <span class="s">"VISANET"</span>, cnpj : <span class="s">"01027058000191"</span> }</div><div class="t" style="left:854px;top:463px;color:#dadada;">Document</div>
<div class="a" style="left:258px;top:484px;width:699.5px;height:25px;background:#212121;box-sizing:border-box;border-bottom:1px dotted #333;"></div><svg style="left:268px;top:492px" width="7" height="10" viewBox="0 0 7 10"><path d="M1.1 1.6L5.4 5L1.1 8.4z" fill="none" stroke="#fff" stroke-width="1.5"/></svg><svg style="left:279px;top:489px" width="14" height="16" viewBox="0 0 14 16" fill="none" stroke="#9a9a9a"><rect x="0.6" y="0.6" width="12.6" height="14.8" stroke-width="1.2"/><path d="M2 2.5h9.8M2.5 2.5v9.5h2.5M5 4.5v8.5h4.5M5 4.5h6.8M6.4 7h5.4M6.4 9.5h5.4M5 12h6.8" stroke-width="0.9"/></svg><div class="t" style="left:296.5px;top:488px;color:#dadada;">(7) 63730b98faaf358e4148489d</div><div class="t" style="left:491.5px;top:488px;color:#dadada;">{ nome : <span class="s">"REDE"</span>, cnpj : <span class="s">"01425787000104"</span> }</div><div class="t" style="left:854px;top:488px;color:#dadada;">Document</div>
<div class="a" style="left:258px;top:509px;width:699.5px;height:25px;background:#2b2b2b;box-sizing:border-box;border-bottom:1px dotted #333;"></div><svg style="left:268px;top:517px" width="7" height="10" viewBox="0 0 7 10"><path d="M1.1 1.6L5.4 5L1.1 8.4z" fill="none" stroke="#fff" stroke-width="1.5"/></svg><svg style="left:279px;top:514px" width="14" height="16" viewBox="0 0 14 16" fill="none" stroke="#9a9a9a"><rect x="0.6" y="0.6" width="12.6" height="14.8" stroke-width="1.2"/><path d="M2 2.5h9.8M2.5 2.5v9.5h2.5M5 4.5v8.5h4.5M5 4.5h6.8M6.4 7h5.4M6.4 9.5h5.4M5 12h6.8" stroke-width="0.9"/></svg><div class="t" style="left:296.5px;top:513px;color:#dadada;">(8) 63730b98faaf358e4148489c</div><div class="t" style="left:491.5px;top:513px;color:#dadada;">{ nome : <span class="s">"REDECARD"</span>, cnpj : <span class="s">"01425787000104"</span> }</div><div class="t" style="left:854px;top:513px;color:#dadada;">Document</div>
<div class="a" style="left:258px;top:534px;width:699.5px;height:25px;background:#212121;box-sizing:border-box;border-bottom:1px dotted #333;"></div><svg style="left:268px;top:542px" width="7" height="10" viewBox="0 0 7 10"><path d="M1.1 1.6L5.4 5L1.1 8.4z" fill="none" stroke="#fff" stroke-width="1.5"/></svg><svg style="left:279px;top:539px" width="14" height="16" viewBox="0 0 14 16" fill="none" stroke="#9a9a9a"><rect x="0.6" y="0.6" width="12.6" height="14.8" stroke-width="1.2"/><path d="M2 2.5h9.8M2.5 2.5v9.5h2.5M5 4.5v8.5h4.5M5 4.5h6.8M6.4 7h5.4M6.4 9.5h5.4M5 12h6.8" stroke-width="0.9"/></svg><div class="t" style="left:296.5px;top:538px;color:#dadada;">(9) 63730b98faaf358e4148489b</div><div class="t" style="left:491.5px;top:538px;color:#dadada;">{ nome : <span class="s">"SICOOB"</span>, cnpj : <span class="s">"02038232000164"</span> }</div><div class="t" style="left:854px;top:538px;color:#dadada;">Document</div>
<div class="a" style="left:258px;top:559px;width:699.5px;height:25px;background:#2b2b2b;box-sizing:border-box;border-bottom:1px dotted #333;"></div><svg style="left:268px;top:567px" width="7" height="10" viewBox="0 0 7 10"><path d="M1.1 1.6L5.4 5L1.1 8.4z" fill="none" stroke="#fff" stroke-width="1.5"/></svg><svg style="left:279px;top:564px" width="14" height="16" viewBox="0 0 14 16" fill="none" stroke="#9a9a9a"><rect x="0.6" y="0.6" width="12.6" height="14.8" stroke-width="1.2"/><path d="M2 2.5h9.8M2.5 2.5v9.5h2.5M5 4.5v8.5h4.5M5 4.5h6.8M6.4 7h5.4M6.4 9.5h5.4M5 12h6.8" stroke-width="0.9"/></svg><div class="t" style="left:296.5px;top:563px;color:#dadada;">(10) 63730b98faaf358e4148489a</div><div class="t" style="left:491.5px;top:563px;color:#dadada;">{ nome : <span class="s">"BIN"</span>, cnpj : <span class="s">"04962772000165"</span> }</div><div class="t" style="left:854px;top:563px;color:#dadada;">Document</div>

</div></div>
<div class="a" style="left:487px;top:334px;width:0;height:238px;border-left:1px dotted #4a4a4a;"></div>
<div class="a" style="left:849px;top:334px;width:0;height:238px;border-left:1px dotted #4a4a4a;"></div>
<!-- table scrollbar -->
<div class="a" style="left:989px;top:334px;width:11px;height:238px;background:#000;"></div>
<div class="a" style="left:990.3px;top:334.5px;width:9.4px;height:44.5px;border-radius:5px;background:#555;"></div>

<!-- STATUS BAR -->
<div class="a" id="status" style="left:0;top:573px;width:1004px;height:32px;background:#212121;"></div>
<div class="t" style="left:6px;top:579.6px;">Copyright ©</div>
<div class="t" style="left:77.5px;top:579.6px;">nosqlbooster.com</div>
<div class="t" style="left:187.5px;top:579.6px;">Version 8.1.9</div>
<svg style="left:273px;top:581.7px" width="15" height="15" viewBox="0 0 15 15" fill="none" stroke="#8a8a8a"><path d="M0.4 0.8h2l2.4 9.6h8" stroke-width="1.1"/><path d="M3 3h11.4l-1.4 5.6H4.4z" stroke-width="1"/><path d="M5.6 3v5.6M7.8 3v5.6M10 3v5.6M12.2 3v5.6" stroke-width="0.8"/><rect x="4.6" y="11.6" width="2.4" height="2.4" fill="#8a8a8a" stroke="none"/><rect x="10" y="11.6" width="2.4" height="2.4" fill="#8a8a8a" stroke="none"/></svg>
<div class="t b" style="left:292.5px;top:580.6px;color:#fb0a0a;">Free Edition</div>
<div class="t" style="left:629.5px;top:580.5px;">Line: 1, Column: 26</div>
<svg style="left:749.6px;top:581.6px" width="14" height="14" viewBox="0 0 14 14" fill="none" stroke="#d0d0d0" stroke-width="1.1"><path d="M0.6 0.6h9.8v10.4a2 2 0 0 1-2 2H0.6z"/><path d="M10.4 4h2.8v7a2 2 0 0 1-2 2H8"/><path d="M2.6 3.4h5.8M2.6 5.8h5.8M2.6 8.2h5.8" stroke-width="0.9"/></svg>
<div class="t" style="left:768.5px;top:580.5px;">Show Log</div>
<svg style="left:837px;top:581.4px" width="15" height="14" viewBox="0 0 15 14" fill="none" stroke="#d0d0d0" stroke-width="1.1"><path d="M7.5 0.6c3.8 0 6.9 2.300 6.9 5.2s-3.1 5.2-6.9 5.2c-0.8 0-1.6-0.1-2.300-0.300L1.8 13l0.8-3.2C1.300 8.8 0.6 7.4 0.6 5.8C0.6 2.9 3.700 0.6 7.5 0.6z"/><path d="M4 4.6h7M4 7h7" stroke-width="0.9"/></svg>
<div class="t" style="left:856px;top:580.5px;">Feedback</div>
<div class="car" style="left:917px;top:587px;"></div>
<div class="t" style="left:935px;top:581.4px;">8:39:37 AM</div>

</div></div>
</body>
</html>
